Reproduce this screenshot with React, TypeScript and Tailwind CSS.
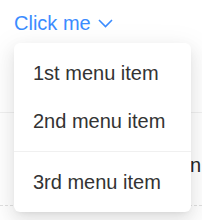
import { useState } from 'react'

const menuItems = ['1st menu item', '2nd menu item', 'divider', '3rd menu item']

export default function App() {
	const [open] = useState(true)

	return (
		<div className="relative w-[202px] h-[220px] overflow-hidden bg-white font-['Liberation_Sans',Arial,sans-serif]">
			{/* Trigger */}
			<div className="pt-[10px] pl-[14px]">
				<button className="flex items-center gap-[7px] text-[20px] leading-[26px] text-[#3b8cff]">
					<span>Click me</span>
					<svg width="15" height="9" viewBox="0 0 15 9" fill="none" className="mt-[1px]">
						<polyline points="1,1 7.5,7.5 14,1" stroke="#3b8cff" strokeWidth="1.6" />
					</svg>
				</button>
			</div>

			{/* Content behind the menu */}
			<div className="mt-[76px] border-t border-[#f0f0f0]" />
			<div className="mt-[40px] flex justify-end pr-[1px]">
				<span className="text-[20px] leading-[24px] text-[#262626]">n</span>
			</div>
			<div className="mt-[28px] border-t border-dashed border-[#e0e0e0]" />

			{/* Dropdown */}
			{open && (
				<div className="absolute left-[14px] top-[43px] w-[177px] rounded-[6px] bg-white py-[6px] shadow-[0_6px_16px_0_rgba(0,0,0,0.08),0_3px_6px_-4px_rgba(0,0,0,0.12),0_9px_28px_8px_rgba(0,0,0,0.05)]">
					{menuItems.map((item, i) =>
						item === 'divider' ? (
							<div key={i} className="my-[6px] border-t border-[#f0f0f0]" />
						) : (
							<div key={i} className="h-[48px] flex items-center pl-[19px] text-[20px] text-[#333333]">
								{item}
							</div>
						)
					)}
				</div>
			)}
		</div>
	)
}
